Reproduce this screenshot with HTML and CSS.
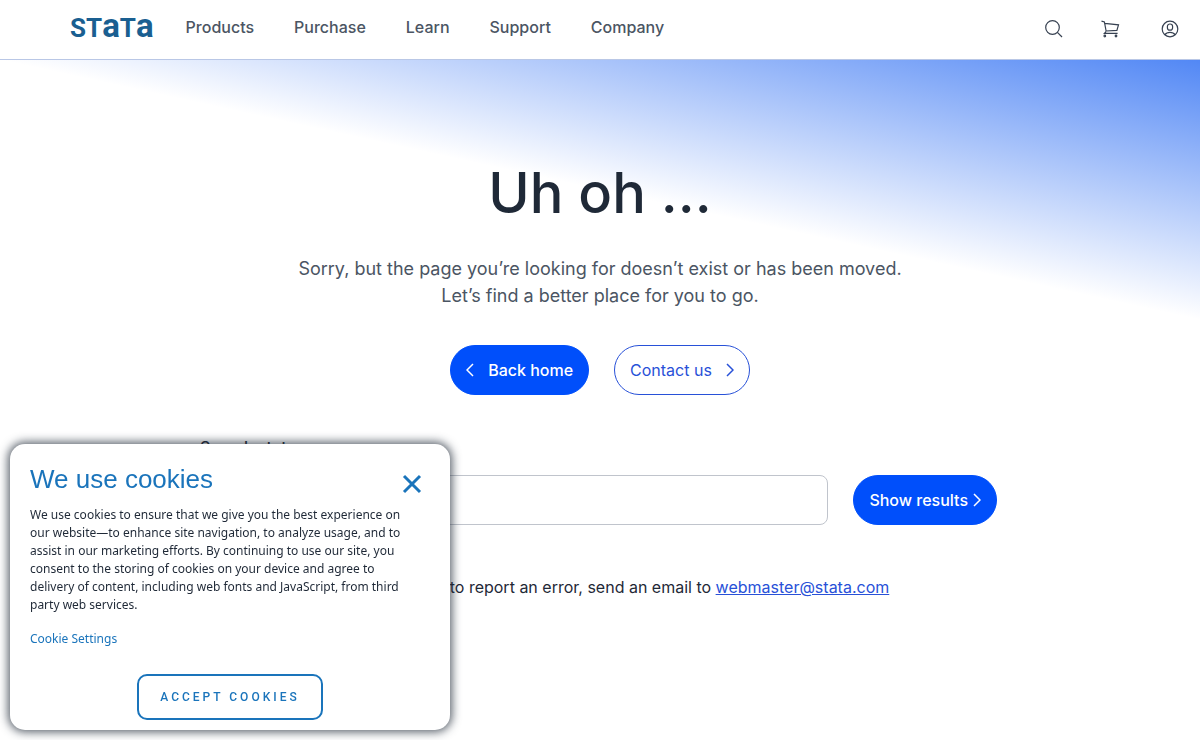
FILE: index.html
```html
<!DOCTYPE html>
<html lang="en">
<head>
    <meta charset="UTF-8">
    <meta name="viewport" content="width=device-width, initial-scale=1.0">
    <title>Page not found | Stata</title>
    <link rel="stylesheet" href="styles.css">
</head>
<body>

    <header class="header">
        <a class="logo" href="#" aria-label="Stata">ST<span>a</span>T<span>a</span></a>
        <nav class="nav">
            <a href="#">Products</a>
            <a href="#">Purchase</a>
            <a href="#">Learn</a>
            <a href="#">Support</a>
            <a href="#">Company</a>
        </nav>
        <div class="tools">
            <a href="#" aria-label="Search">
                <svg width="20" height="20" viewBox="0 0 20 20"><circle cx="8.5" cy="8.5" r="6.8"/><path d="M13.4 13.4L18 18"/></svg>
            </a>
            <a href="#" aria-label="Cart">
                <svg width="22" height="20" viewBox="0 0 22 20"><path d="M.5 2.2L3.4 3l1.8 9.5M3.6 4.4l13.9 1.4-1.6 5.6-10.8.6M5 12.6l-1.6 1.8h13.2"/><circle cx="3.8" cy="17" r=".8"/><circle cx="15" cy="17" r=".8"/></svg>
            </a>
            <a href="#" aria-label="Account">
                <svg width="20" height="20" viewBox="0 0 20 20"><circle cx="10" cy="10" r="7.8"/><rect x="7.4" y="5" width="5.2" height="6.2" rx="2.5"/><path d="M4.8 15.8c1.2-1.8 3-2.5 5.2-2.5s4 .7 5.2 2.5"/></svg>
            </a>
        </div>
    </header>

    <main class="main">
        <section class="hero">
            <h1>Uh oh ...</h1>
            <p>Sorry, but the page you’re looking for doesn’t exist or has been moved.<br>Let’s find a better place for you to go.</p>
            <div class="actions">
                <a class="btn btn-back" href="#">
                    <svg width="8" height="14" viewBox="0 0 8 14"><path d="M7 1L1 7l6 6"/></svg>
                    Back home
                </a>
                <a class="btn btn-outline" href="#">
                    Contact us
                    <svg width="8" height="14" viewBox="0 0 8 14"><path d="M1 1l6 6-6 6"/></svg>
                </a>
            </div>
        </section>

        <form class="search">
            <label for="search">Search stata.com</label>
            <div class="search-row">
                <input type="text" id="search" name="q">
                <button class="btn btn-results" type="submit">
                    Show results
                    <svg width="8" height="14" viewBox="0 0 8 14"><path d="M1 1l6 6-6 6"/></svg>
                </button>
            </div>
        </form>

        <p class="report">If you would like to report an error, send an email to <a href="mailto:webmaster@stata.com">webmaster@stata.com</a></p>
    </main>

    <div class="cookies" role="dialog" aria-labelledby="cookies-title">
        <div class="cookies-head">
            <h2 id="cookies-title">We use cookies</h2>
            <button class="close" type="button" aria-label="Close">
                <svg width="20" height="20" viewBox="0 0 20 20"><path d="M2 2l16 16M18 2L2 18"/></svg>
            </button>
        </div>
        <p>We use cookies to ensure that we give you the best experience on our website—to enhance site navigation, to analyze usage, and to assist in our marketing efforts. By continuing to use our site, you consent to the storing of cookies on your device and agree to delivery of content, including web fonts and JavaScript, from third party web services.</p>
        <a class="settings" href="#">Cookie Settings</a>
        <button class="accept" type="button">Accept cookies</button>
    </div>

</body>
</html>
```

FILE: styles.css
```css
* {
    box-sizing: border-box;
}
body {
    margin: 0;
    font-family: Inter, sans-serif;
    font-size: 16px;
    line-height: 24px;
    color: #1f2937;
    background-color: #fff;
}
h1, h2, p {
    margin: 0;
    font-weight: 400;
}
svg {
    display: block;
    fill: none;
    stroke: currentColor;
}
.header {
    display: flex;
    align-items: center;
    height: 60px;
    padding: 0 20px 2px 70px;
    border-bottom: 1px solid #b9c7e6;
}
.logo {
    display: flex;
    align-items: baseline;
    margin-right: 32px;
    padding-bottom: 4px;
    font-family: Roboto, sans-serif;
    font-size: 26px;
    font-weight: 700;
    color: #1a5f91;
    text-decoration: none;
}
.logo span {
    font-size: 33px;
}
.nav {
    display: flex;
    gap: 40px;
    padding-bottom: 4px;
}
.nav a {
    font-weight: 500;
    color: #4b5563;
    text-decoration: none;
}
.tools {
    display: flex;
    gap: 37px;
    margin-left: auto;
}
.tools a {
    color: #374151;
}
.tools svg {
    stroke-width: 1.2;
}
.main {
    padding-top: 96px;
    background: linear-gradient(to top right, rgba(0, 79, 251, 0) 50%, rgba(0, 79, 240, 0.68)) no-repeat;
    background-size: 100% 260px;
}
.hero {
    text-align: center;
}
.hero h1 {
    font-size: 56px;
    font-weight: 500;
    line-height: 74px;
}
.hero p {
    margin-top: 25px;
    font-size: 18px;
    line-height: 27px;
    color: #4b5563;
}
.actions {
    display: flex;
    justify-content: center;
    gap: 25px;
    margin-top: 36px;
}
.btn {
    display: flex;
    align-items: center;
    height: 50px;
    padding: 0 15px;
    border: 1px solid #004ffb;
    border-radius: 25px;
    background-color: #004ffb;
    font: 500 16px/24px Inter, sans-serif;
    color: #fff;
    text-decoration: none;
    white-space: nowrap;
    cursor: pointer;
}
.btn svg {
    stroke-width: 1.5;
}
.btn-back, .btn-outline {
    gap: 14px;
}
.btn-outline {
    border-color: #2851d8;
    background-color: #fff;
    font-weight: 400;
    color: #2851d8;
}
.btn-results {
    gap: 5px;
}
.search {
    max-width: 800px;
    margin: 40px auto 0;
}
.search label {
    display: block;
    font-weight: 500;
}
.search-row {
    display: flex;
    gap: 25px;
    margin-top: 16px;
    padding-right: 3px;
}
.search-row input {
    flex: 1;
    height: 50px;
    padding: 0 16px;
    border: 1px solid #c0c4cc;
    border-radius: 8px;
    font: inherit;
}
.report {
    margin-top: 50px;
    padding-left: 12px;
    text-align: center;
}
.report a {
    color: #2851d8;
}
.cookies {
    position: fixed;
    left: 10px;
    bottom: 10px;
    display: flex;
    flex-direction: column;
    width: 440px;
    padding: 20px 20px 10px;
    border-radius: 15px;
    background-color: #fff;
    box-shadow: 0 0 10px 2px rgba(31, 41, 55, 0.75);
    font-family: "Noto Sans", sans-serif;
    font-size: 12px;
    line-height: 18px;
}
.cookies-head {
    display: flex;
    justify-content: space-between;
    height: 42px;
}
.cookies h2 {
    font-family: "Liberation Sans", Arial, sans-serif;
    font-size: 26px;
    line-height: 30px;
    color: #1a74bb;
}
.cookies p {
    padding-right: 20px;
}
.close {
    align-self: flex-start;
    margin: 10px 8px 0 0;
    padding: 0;
    border: none;
    background: none;
    color: #1a74bb;
    cursor: pointer;
}
.close svg {
    stroke-width: 3;
}
.settings {
    align-self: flex-start;
    margin-top: 16px;
    color: #1a74bb;
    text-decoration: none;
}
.accept {
    align-self: center;
    height: 46px;
    margin-top: 26px;
    padding: 0 21px;
    border: 2px solid #1a74bb;
    border-radius: 10px;
    background-color: #fff;
    font-family: Roboto, sans-serif;
    font-size: 12px;
    font-weight: 500;
    letter-spacing: 3px;
    text-transform: uppercase;
    color: #1a74bb;
    cursor: pointer;
}
```
